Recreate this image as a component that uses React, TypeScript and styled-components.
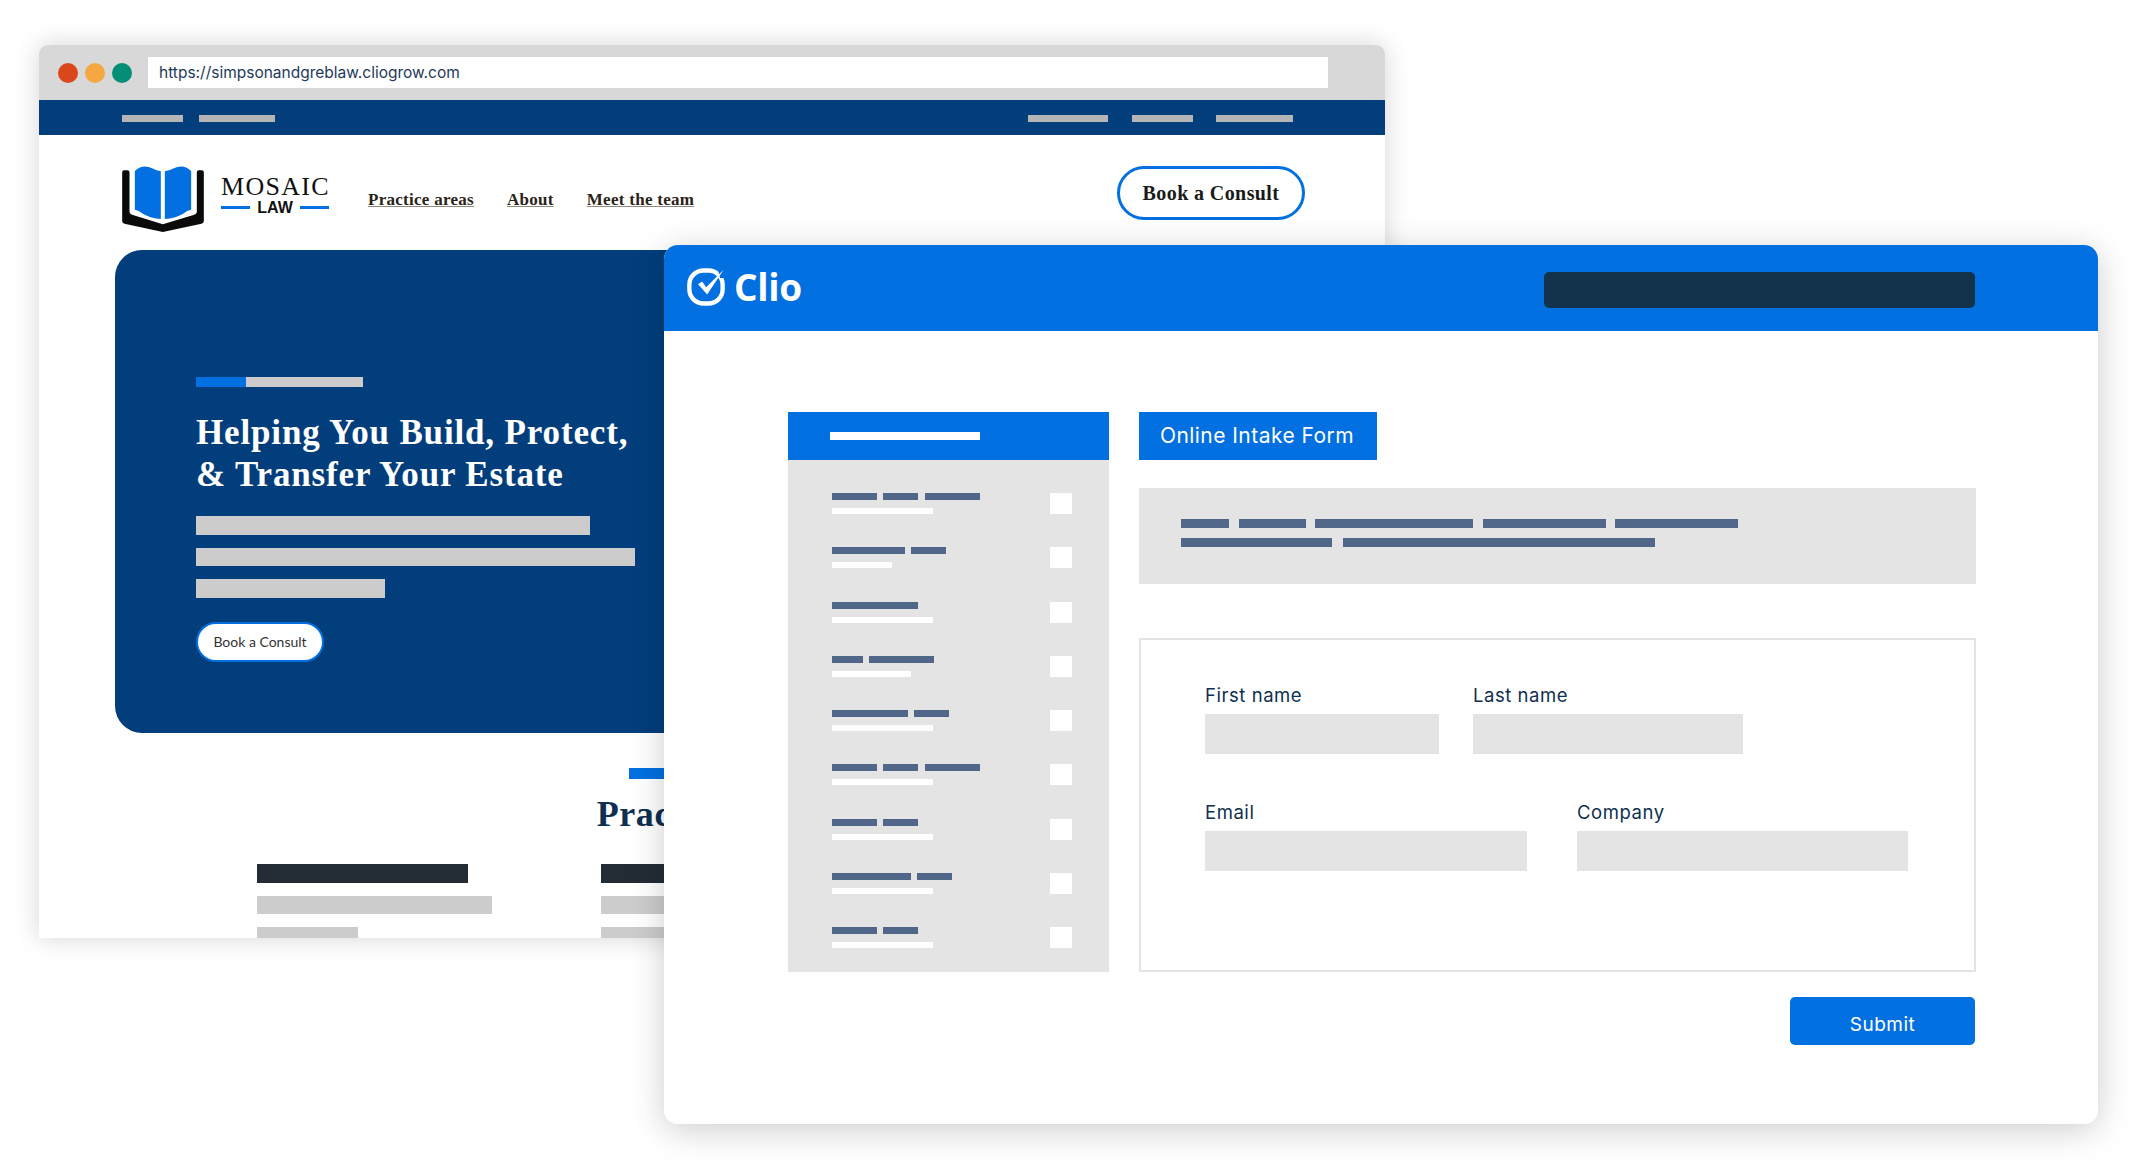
import React from "react";
import styled, { createGlobalStyle } from "styled-components";

const GlobalStyle = createGlobalStyle`
  html, body {
    margin: 0;
    padding: 0;
    background: #fff;
  }
  body {
    font-family: "Inter", "Liberation Sans", sans-serif;
  }
`;

const Stage = styled.div`
  position: relative;
  width: 2145px;
  height: 1167px;
  overflow: hidden;
  background: #fff;
`;

/* ---------- shared ---------- */

const Bar = styled.div<{ $w: number; $h: number; $color: string }>`
  flex: none;
  width: ${(p) => p.$w}px;
  height: ${(p) => p.$h}px;
  background: ${(p) => p.$color};
`;

/* ---------- back window (law firm site) ---------- */

const SiteWindow = styled.div`
  position: absolute;
  left: 39px;
  top: 45px;
  width: 1346px;
  height: 893px;
  border-radius: 9px 9px 0 0;
  overflow: hidden;
  background: #fff;
  box-shadow: 0 0 26px rgba(0, 0, 0, 0.17);
`;

const Chrome = styled.div`
  display: flex;
  align-items: center;
  height: 55px;
  padding: 0 57px 0 19px;
  box-sizing: border-box;
  background: #d8d8d8;
`;

const Dot = styled.span<{ $color: string }>`
  flex: none;
  width: 20px;
  height: 20px;
  margin-right: 7px;
  border-radius: 50%;
  background: ${(p) => p.$color};
`;

const UrlField = styled.div`
  flex: 1;
  height: 31px;
  margin-left: 9px;
  padding-left: 11px;
  box-sizing: border-box;
  background: #fff;
  color: #1e3a5a;
  font-size: 15.5px;
  line-height: 31px;
`;

const TopStrip = styled.div`
  display: flex;
  align-items: center;
  justify-content: space-between;
  height: 35px;
  padding: 1px 92px 0 83px;
  box-sizing: border-box;
  background: #023e7c;
`;

const StripGroup = styled.div<{ $gap: number }>`
  display: flex;
  gap: ${(p) => p.$gap}px;
`;

const SiteHeader = styled.div`
  display: flex;
  align-items: flex-start;
  height: 115px;
  padding: 30px 80px 0 83px;
  box-sizing: border-box;
`;

const LogoWrap = styled.div`
  display: flex;
  flex: none;
  width: 246px;
  gap: 17px;
  margin-top: 1px;
`;

const Wordmark = styled.div`
  display: flex;
  flex-direction: column;
  width: 108px;
  margin-top: 8px;
`;

const MosaicText = styled.div`
  color: #111;
  font-family: "Liberation Serif", serif;
  font-size: 26px;
  letter-spacing: 1.3px;
  line-height: 26px;
  white-space: nowrap;
`;

const LawRow = styled.div`
  display: flex;
  align-items: center;
  justify-content: space-between;
`;

const LawText = styled.span`
  color: #111;
  font-family: "Liberation Sans", sans-serif;
  font-size: 16px;
  font-weight: 700;
  line-height: 15px;
`;

const Nav = styled.nav`
  display: flex;
  flex: 1;
  gap: 33px;
  margin-top: 25px;
`;

const NavLink = styled.a`
  color: #2a2318;
  font-family: "Liberation Serif", serif;
  font-size: 17px;
  font-weight: 700;
  letter-spacing: 0.28px;
  line-height: 20px;
  text-decoration: underline;
  text-decoration-color: #8f8a80;
`;

const ConsultButton = styled.div`
  display: flex;
  align-items: center;
  justify-content: center;
  width: 188px;
  height: 54px;
  margin-top: 1px;
  padding-top: 1px;
  box-sizing: border-box;
  border: 3px solid #0270e0;
  border-radius: 27px;
  color: #1a1a1a;
  font-family: "Liberation Serif", serif;
  font-size: 20px;
  font-weight: 700;
  letter-spacing: 0.4px;
`;

const Hero = styled.section`
  width: 1180px;
  height: 483px;
  margin-left: 76px;
  padding: 127px 0 0 81px;
  box-sizing: border-box;
  border-radius: 27px 27px 0 27px;
  background: #023e7c;
`;

const AccentBar = styled.div`
  display: flex;
  margin-bottom: 25px;
`;

const HeroTitle = styled.h1`
  margin: 0 0 21px;
  color: #fff;
  font-family: "Liberation Serif", serif;
  font-size: 35px;
  font-weight: 700;
  letter-spacing: 0.85px;
  line-height: 41.5px;
`;

const HeroCopy = styled.div`
  display: flex;
  flex-direction: column;
  gap: 13px;
`;

const HeroButton = styled.div`
  display: flex;
  align-items: center;
  justify-content: center;
  width: 128px;
  height: 40px;
  margin-top: 24px;
  box-sizing: border-box;
  border: 2px solid #0270e0;
  border-radius: 20px;
  background: #fff;
  color: #333;
  font-family: "Lato", sans-serif;
  font-size: 14px;
`;

const PracticeSection = styled.section`
  display: flex;
  flex-direction: column;
  align-items: center;
  padding-top: 35px;
`;

const PracticeTitle = styled.h2`
  margin: 13px 0 28px;
  color: #0e2f50;
  font-family: "Liberation Serif", serif;
  font-size: 36px;
  font-weight: 700;
  letter-spacing: 0.6px;
  line-height: 44px;
`;

const PracticeGrid = styled.div`
  display: flex;
  gap: 129.5px;
  align-self: flex-start;
  margin-left: 217.5px;
`;

const PracticeCard = styled.div`
  display: flex;
  flex-direction: column;
  gap: 13px;
  width: 215px;
`;

/* ---------- front window (Clio intake form) ---------- */

const ClioWindow = styled.div`
  position: absolute;
  left: 664px;
  top: 245px;
  width: 1434px;
  height: 879px;
  border-radius: 14px;
  overflow: hidden;
  background: #fff;
`;

const ClioShadow = styled.div`
  position: absolute;
  left: 664px;
  top: 245px;
  width: 1434px;
  height: 879px;
  border-radius: 14px;
  box-shadow: 0 6px 34px rgba(0, 0, 0, 0.2);
`;

const ClioHeader = styled.header`
  display: flex;
  align-items: center;
  justify-content: space-between;
  height: 86px;
  padding: 0 123.5px 0 23px;
  box-sizing: border-box;
  background: #0270e0;
`;

const ClioLogo = styled.div`
  display: flex;
  align-items: center;
  gap: 9px;
  margin-top: -2px;
`;

const ClioName = styled.span`
  color: #fff;
  font-family: "Open Sans", sans-serif;
  font-size: 37px;
  font-weight: 700;
  letter-spacing: -0.3px;
  line-height: 40px;
`;

const HeaderSlot = styled.div`
  width: 430.5px;
  height: 36px;
  margin-top: 4px;
  border-radius: 5px;
  background: #13334d;
`;

const ClioBody = styled.div`
  display: flex;
  gap: 30px;
  padding: 81px 122px 0 124px;
`;

const Checklist = styled.aside`
  flex: none;
  width: 321px;
  height: 560px;
  background: #e4e4e4;
`;

const ChecklistHead = styled.div`
  display: flex;
  align-items: center;
  height: 48px;
  padding-left: 42px;
  background: #0270e0;
`;

const ChecklistRows = styled.div`
  display: flex;
  flex-direction: column;
  gap: 33px;
  padding: 33px 37px 0 44px;
`;

const ChecklistRow = styled.div`
  display: flex;
  justify-content: space-between;
  height: 21.3px;
`;

const RowLines = styled.div`
  display: flex;
  flex-direction: column;
  gap: 8px;
`;

const RowWords = styled.div`
  display: flex;
  gap: 6.4px;
`;

const CheckBox = styled.div`
  width: 22px;
  height: 21px;
  background: #fff;
`;

const FormColumn = styled.div`
  flex: 1;
  display: flex;
  flex-direction: column;
  align-items: flex-start;
`;

const FormTab = styled.div`
  display: flex;
  align-items: center;
  justify-content: center;
  width: 238px;
  height: 48px;
  padding: 0 2px 1px 0;
  box-sizing: border-box;
  background: #0270e0;
  color: #fff;
  font-size: 21px;
  letter-spacing: 0.45px;
`;

const Notice = styled.div`
  display: flex;
  flex-direction: column;
  gap: 10px;
  align-self: stretch;
  height: 96px;
  margin: 28px 0 54px;
  padding: 31px 0 0 42px;
  box-sizing: border-box;
  background: #e4e4e4;
`;

const NoticeLine = styled.div<{ $gap: number }>`
  display: flex;
  gap: ${(p) => p.$gap}px;
`;

const FormBox = styled.div`
  display: flex;
  flex-direction: column;
  gap: 46.5px;
  align-self: stretch;
  height: 334px;
  padding: 44px 0 0 64px;
  box-sizing: border-box;
  border: 2.5px solid #e4e4e4;
`;

const FieldRow = styled.div<{ $gap: number }>`
  display: flex;
  gap: ${(p) => p.$gap}px;
`;

const Field = styled.label`
  display: flex;
  flex-direction: column;
  gap: 8px;
`;

const FieldLabel = styled.span`
  color: #0e2f50;
  font-size: 18.5px;
  letter-spacing: 0.55px;
  line-height: 22px;
`;

const FieldInput = styled.div<{ $w: number }>`
  width: ${(p) => p.$w}px;
  height: 40px;
  background: #e4e4e4;
`;

const SubmitButton = styled.div`
  display: flex;
  align-items: center;
  justify-content: center;
  align-self: flex-end;
  width: 185px;
  height: 48px;
  margin: 25px 1px 0 0;
  padding-top: 7px;
  box-sizing: border-box;
  border-radius: 5px;
  background: #0270e0;
  color: #fff;
  font-size: 19px;
  letter-spacing: 0.5px;
`;

/* ---------- drawings ---------- */

function BookMark() {
  return (
    <svg width="82" height="66" viewBox="38 47 245 198">
      <path
        fill="#0a0a0a"
        d="M44 60H54Q60 60 60 66V186Q62 192 70 194L160 222L252 194Q260 192 262 186V66Q262 60 268 60H277Q283 60 283 66V212Q283 218 276 220L160 245L45 220Q38 218 38 212V66Q38 60 44 60Z"
      />
      <path
        fill="#0270e0"
        d="M76 62Q100 40 128 54Q142 62 154 63V206Q125 204 100 190Q88 180 76 178Z"
      />
      <path
        fill="#0270e0"
        d="M245 62Q221 40 193 54Q179 62 166 63V206Q196 204 221 190Q233 180 245 178Z"
      />
    </svg>
  );
}

function ClioMark() {
  return (
    <svg width="38" height="38" viewBox="52 55 113 112">
      <rect x="59" y="62" width="99" height="98" rx="42" fill="none" stroke="#fff" strokeWidth="13" />
      <path fill="#0270e0" d="M142 50L170 50L170 84L150 84Z" />
      <path fill="#fff" d="M85 103L97 95L109 112L161 60L112 133Z" />
    </svg>
  );
}

/* ---------- data ---------- */

const checklist: { words: number[]; sub: number }[] = [
  { words: [45, 35, 55], sub: 101 },
  { words: [73, 35], sub: 60 },
  { words: [86], sub: 101 },
  { words: [31, 65], sub: 79 },
  { words: [76, 35], sub: 101 },
  { words: [45, 35, 55], sub: 101 },
  { words: [45, 35], sub: 101 },
  { words: [79, 35], sub: 101 },
  { words: [45, 35], sub: 101 },
];

const SLATE = "#50678a";

export default function App() {
  return (
    <Stage>
      <GlobalStyle />

      <SiteWindow>
        <Chrome>
          <Dot $color="#d9471b" />
          <Dot $color="#f5a742" />
          <Dot $color="#058e76" />
          <UrlField>https://simpsonandgreblaw.cliogrow.com</UrlField>
        </Chrome>
        <TopStrip>
          <StripGroup $gap={16}>
            <Bar $w={61} $h={7} $color="#b5b5b5" />
            <Bar $w={76} $h={7} $color="#b5b5b5" />
          </StripGroup>
          <StripGroup $gap={23.5}>
            <Bar $w={80} $h={7} $color="#b5b5b5" />
            <Bar $w={61} $h={7} $color="#b5b5b5" />
            <Bar $w={77} $h={7} $color="#b5b5b5" />
          </StripGroup>
        </TopStrip>
        <SiteHeader>
          <LogoWrap>
            <BookMark />
            <Wordmark>
              <MosaicText>MOSAIC</MosaicText>
              <LawRow>
                <Bar $w={29} $h={3} $color="#0270e0" />
                <LawText>LAW</LawText>
                <Bar $w={29} $h={3} $color="#0270e0" />
              </LawRow>
            </Wordmark>
          </LogoWrap>
          <Nav>
            <NavLink>Practice areas</NavLink>
            <NavLink>About</NavLink>
            <NavLink>Meet the team</NavLink>
          </Nav>
          <ConsultButton>Book a Consult</ConsultButton>
        </SiteHeader>
        <Hero>
          <AccentBar>
            <Bar $w={50} $h={10} $color="#0270e0" />
            <Bar $w={117} $h={10} $color="#cccccc" />
          </AccentBar>
          <HeroTitle>
            Helping You Build, Protect,
            <br />
            &amp; Transfer Your Estate
          </HeroTitle>
          <HeroCopy>
            <Bar $w={394} $h={18.5} $color="#cccccc" />
            <Bar $w={439} $h={18.5} $color="#cccccc" />
            <Bar $w={189} $h={18.5} $color="#cccccc" />
          </HeroCopy>
          <HeroButton>Book a Consult</HeroButton>
        </Hero>
        <PracticeSection>
          <Bar $w={166} $h={11} $color="#0270e0" />
          <PracticeTitle>Practice Areas</PracticeTitle>
          <PracticeGrid>
            <PracticeCard>
              <Bar $w={211} $h={18.5} $color="#232c35" />
              <Bar $w={235} $h={18.5} $color="#cccccc" />
              <Bar $w={101} $h={18.5} $color="#cccccc" />
            </PracticeCard>
            <PracticeCard>
              <Bar $w={211} $h={18.5} $color="#232c35" />
              <Bar $w={235} $h={18.5} $color="#cccccc" />
              <Bar $w={101} $h={18.5} $color="#cccccc" />
            </PracticeCard>
          </PracticeGrid>
        </PracticeSection>
      </SiteWindow>

      <ClioShadow />
      <ClioWindow>
        <ClioHeader>
          <ClioLogo>
            <ClioMark />
            <ClioName>Clio</ClioName>
          </ClioLogo>
          <HeaderSlot />
        </ClioHeader>
        <ClioBody>
          <Checklist>
            <ChecklistHead>
              <Bar $w={150} $h={8} $color="#fff" />
            </ChecklistHead>
            <ChecklistRows>
              {checklist.map((row, i) => (
                <ChecklistRow key={i}>
                  <RowLines>
                    <RowWords>
                      {row.words.map((w, j) => (
                        <Bar key={j} $w={w} $h={7} $color={SLATE} />
                      ))}
                    </RowWords>
                    <Bar $w={row.sub} $h={6} $color="#fff" />
                  </RowLines>
                  <CheckBox />
                </ChecklistRow>
              ))}
            </ChecklistRows>
          </Checklist>
          <FormColumn>
            <FormTab>Online Intake Form</FormTab>
            <Notice>
              <NoticeLine $gap={9.5}>
                <Bar $w={48} $h={9} $color={SLATE} />
                <Bar $w={67} $h={9} $color={SLATE} />
                <Bar $w={158} $h={9} $color={SLATE} />
                <Bar $w={123} $h={9} $color={SLATE} />
                <Bar $w={123} $h={9} $color={SLATE} />
              </NoticeLine>
              <NoticeLine $gap={11}>
                <Bar $w={151} $h={9} $color={SLATE} />
                <Bar $w={312} $h={9} $color={SLATE} />
              </NoticeLine>
            </Notice>
            <FormBox>
              <FieldRow $gap={34}>
                <Field>
                  <FieldLabel>First name</FieldLabel>
                  <FieldInput $w={234} />
                </Field>
                <Field>
                  <FieldLabel>Last name</FieldLabel>
                  <FieldInput $w={270} />
                </Field>
              </FieldRow>
              <FieldRow $gap={50}>
                <Field>
                  <FieldLabel>Email</FieldLabel>
                  <FieldInput $w={322} />
                </Field>
                <Field>
                  <FieldLabel>Company</FieldLabel>
                  <FieldInput $w={331} />
                </Field>
              </FieldRow>
            </FormBox>
            <SubmitButton>Submit</SubmitButton>
          </FormColumn>
        </ClioBody>
      </ClioWindow>
    </Stage>
  );
}
